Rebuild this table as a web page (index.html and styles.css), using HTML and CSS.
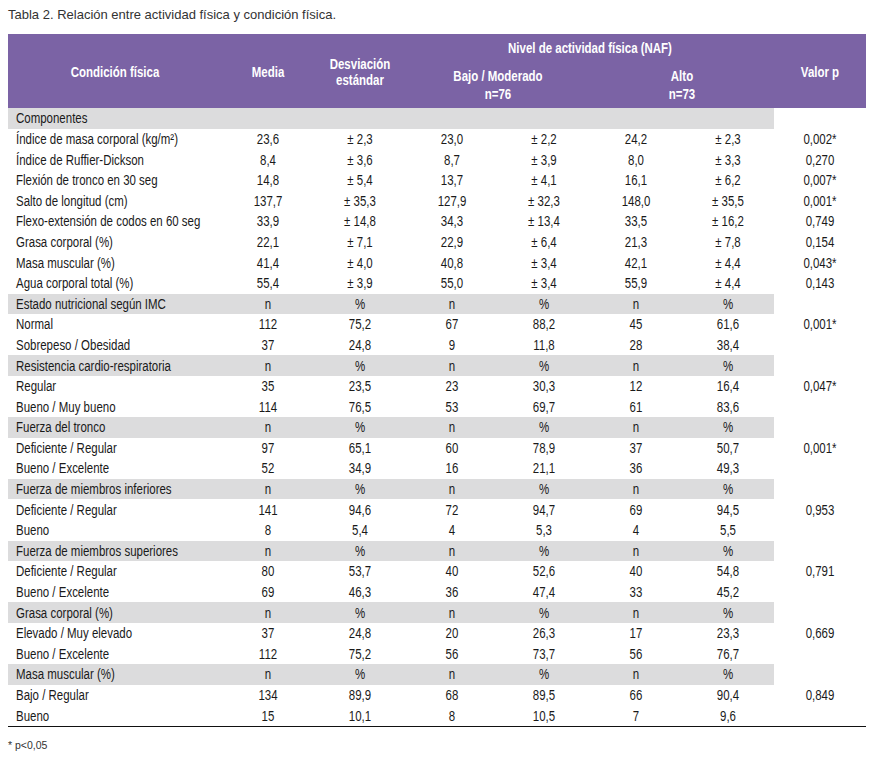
FILE: index.html
```html
<!DOCTYPE html>
<html lang="es">
<head>
<meta charset="utf-8">
<title>Tabla 2</title>
<link rel="stylesheet" href="styles.css">
</head>
<body>
<p class="caption">Tabla 2. Relación entre actividad física y condición física.</p>
<div class="wrap">
  <div class="sheet">
    <div class="head">
      <div class="hc c1 tall">Condición física</div>
      <div class="hc c2 tall">Media</div>
      <div class="hc c3 tall two">Desviación<br>estándar</div>
      <div class="hc naf">Nivel de actividad física (NAF)</div>
      <div class="hc c8 tall">Valor p</div>
      <div class="hc sub bajo">Bajo / Moderado<br>n=76</div>
      <div class="hc sub alto">Alto<br>n=73</div>
    </div>

    <div class="row sec"><div>Componentes</div><div></div><div></div><div></div><div></div><div></div><div></div><div></div></div>
    <div class="row"><div>Índice de masa corporal (kg/m²)</div><div>23,6</div><div>± 2,3</div><div>23,0</div><div>± 2,2</div><div>24,2</div><div>± 2,3</div><div>0,002*</div></div>
    <div class="row"><div>Índice de Ruffier-Dickson</div><div>8,4</div><div>± 3,6</div><div>8,7</div><div>± 3,9</div><div>8,0</div><div>± 3,3</div><div>0,270</div></div>
    <div class="row"><div>Flexión de tronco en 30 seg</div><div>14,8</div><div>± 5,4</div><div>13,7</div><div>± 4,1</div><div>16,1</div><div>± 6,2</div><div>0,007*</div></div>
    <div class="row"><div>Salto de longitud (cm)</div><div>137,7</div><div>± 35,3</div><div>127,9</div><div>± 32,3</div><div>148,0</div><div>± 35,5</div><div>0,001*</div></div>
    <div class="row"><div>Flexo-extensión de codos en 60 seg</div><div>33,9</div><div>± 14,8</div><div>34,3</div><div>± 13,4</div><div>33,5</div><div>± 16,2</div><div>0,749</div></div>
    <div class="row"><div>Grasa corporal (%)</div><div>22,1</div><div>± 7,1</div><div>22,9</div><div>± 6,4</div><div>21,3</div><div>± 7,8</div><div>0,154</div></div>
    <div class="row"><div>Masa muscular (%)</div><div>41,4</div><div>± 4,0</div><div>40,8</div><div>± 3,4</div><div>42,1</div><div>± 4,4</div><div>0,043*</div></div>
    <div class="row"><div>Agua corporal total (%)</div><div>55,4</div><div>± 3,9</div><div>55,0</div><div>± 3,4</div><div>55,9</div><div>± 4,4</div><div>0,143</div></div>

    <div class="row sec"><div>Estado nutricional según IMC</div><div>n</div><div>%</div><div>n</div><div>%</div><div>n</div><div>%</div><div></div></div>
    <div class="row"><div>Normal</div><div>112</div><div>75,2</div><div>67</div><div>88,2</div><div>45</div><div>61,6</div><div>0,001*</div></div>
    <div class="row"><div>Sobrepeso / Obesidad</div><div>37</div><div>24,8</div><div>9</div><div>11,8</div><div>28</div><div>38,4</div><div></div></div>

    <div class="row sec"><div>Resistencia cardio-respiratoria</div><div>n</div><div>%</div><div>n</div><div>%</div><div>n</div><div>%</div><div></div></div>
    <div class="row"><div>Regular</div><div>35</div><div>23,5</div><div>23</div><div>30,3</div><div>12</div><div>16,4</div><div>0,047*</div></div>
    <div class="row"><div>Bueno / Muy bueno</div><div>114</div><div>76,5</div><div>53</div><div>69,7</div><div>61</div><div>83,6</div><div></div></div>

    <div class="row sec"><div>Fuerza del tronco</div><div>n</div><div>%</div><div>n</div><div>%</div><div>n</div><div>%</div><div></div></div>
    <div class="row"><div>Deficiente / Regular</div><div>97</div><div>65,1</div><div>60</div><div>78,9</div><div>37</div><div>50,7</div><div>0,001*</div></div>
    <div class="row"><div>Bueno / Excelente</div><div>52</div><div>34,9</div><div>16</div><div>21,1</div><div>36</div><div>49,3</div><div></div></div>

    <div class="row sec"><div>Fuerza de miembros inferiores</div><div>n</div><div>%</div><div>n</div><div>%</div><div>n</div><div>%</div><div></div></div>
    <div class="row"><div>Deficiente / Regular</div><div>141</div><div>94,6</div><div>72</div><div>94,7</div><div>69</div><div>94,5</div><div>0,953</div></div>
    <div class="row"><div>Bueno</div><div>8</div><div>5,4</div><div>4</div><div>5,3</div><div>4</div><div>5,5</div><div></div></div>

    <div class="row sec"><div>Fuerza de miembros superiores</div><div>n</div><div>%</div><div>n</div><div>%</div><div>n</div><div>%</div><div></div></div>
    <div class="row"><div>Deficiente / Regular</div><div>80</div><div>53,7</div><div>40</div><div>52,6</div><div>40</div><div>54,8</div><div>0,791</div></div>
    <div class="row"><div>Bueno / Excelente</div><div>69</div><div>46,3</div><div>36</div><div>47,4</div><div>33</div><div>45,2</div><div></div></div>

    <div class="row sec"><div>Grasa corporal (%)</div><div>n</div><div>%</div><div>n</div><div>%</div><div>n</div><div>%</div><div></div></div>
    <div class="row"><div>Elevado / Muy elevado</div><div>37</div><div>24,8</div><div>20</div><div>26,3</div><div>17</div><div>23,3</div><div>0,669</div></div>
    <div class="row"><div>Bueno / Excelente</div><div>112</div><div>75,2</div><div>56</div><div>73,7</div><div>56</div><div>76,7</div><div></div></div>

    <div class="row sec"><div>Masa muscular (%)</div><div>n</div><div>%</div><div>n</div><div>%</div><div>n</div><div>%</div><div></div></div>
    <div class="row"><div>Bajo / Regular</div><div>134</div><div>89,9</div><div>68</div><div>89,5</div><div>66</div><div>90,4</div><div>0,849</div></div>
    <div class="row last"><div>Bueno</div><div>15</div><div>10,1</div><div>8</div><div>10,5</div><div>7</div><div>9,6</div><div></div></div>
  </div>
</div>
<p class="note">* p&lt;0,05</p>
</body>
</html>
```
FILE: styles.css
```css
html, body {
  margin: 0;
  padding: 0;
  background: #ffffff;
}
body {
  padding: 8px 7px 0 8px;
  font-family: "Liberation Sans", Arial, sans-serif;
  color: #222;
}
.caption {
  margin: 0;
  font-size: 13px;
  line-height: 14px;
  color: #333;
}
.wrap {
  margin-top: 12px;
  width: 858px;
  overflow: hidden;
}
/* The sheet is laid out 1.25x wide and squeezed horizontally (x0.8)
   to imitate the condensed face of the original table. */
.sheet {
  --cols: 267.5px repeat(7, 115px);
  width: 1072.5px;
  transform: scaleX(0.8);
  transform-origin: 0 0;
  font-family: "Liberation Sans", Arial, sans-serif;
  font-size: 14.35px;
  color: #1a1a1a;
}

/* header */
.head {
  display: grid;
  grid-template-columns: var(--cols);
  grid-template-rows: 26px 48.2px;
  background: #7b63a5;
  color: #ffffff;
  font-weight: bold;
  text-align: center;
}
.hc { white-space: nowrap; }
.tall {
  grid-row: 1 / 3;
  align-self: center;
  line-height: 20px;
  padding-top: 1px;
}
.c1 { grid-column: 1; }
.c2 { grid-column: 2; }
.c3 { grid-column: 3; }
.c8 { grid-column: 8; }
.two { line-height: 16px; padding-top: 2px; }
.naf {
  grid-column: 4 / 8;
  grid-row: 1;
  line-height: 26px;
  padding-top: 1px;
}
.sub {
  grid-row: 2;
  align-self: start;
  padding-top: 7px;
  line-height: 18.3px;
}
.bajo { grid-column: 4 / 6; }
.alto { grid-column: 6 / 8; }

/* body rows */
.row {
  display: grid;
  grid-template-columns: var(--cols);
  height: 20.6px;
}
.row > div {
  padding-top: 1.2px;
  line-height: 19.4px;
  text-align: center;
  white-space: nowrap;
}
.row > div:first-child {
  text-align: left;
  padding-left: 10px;
}
.row.sec {
  background: linear-gradient(#dcdcdd, #dcdcdd) no-repeat 0 0 / 957.5px 100%;
}
.row.last {
  border-bottom: 1px solid #111;
}

.note {
  margin: 12px 0 0 0;
  font-size: 10.5px;
  line-height: 12px;
  color: #333;
}
```
